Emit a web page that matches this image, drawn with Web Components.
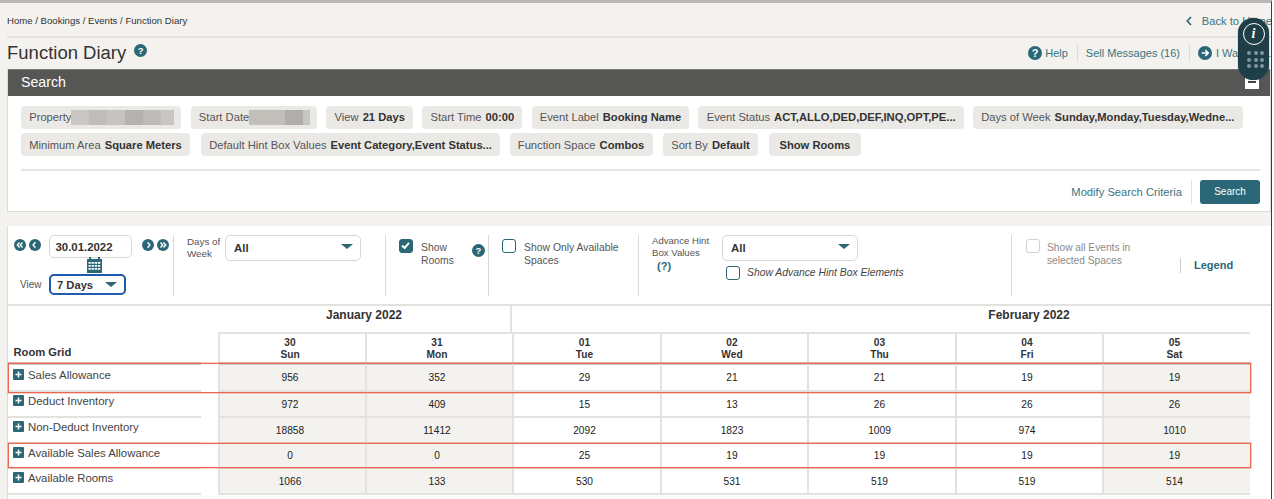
<!DOCTYPE html>
<html lang="en"><head><meta charset="utf-8"><title>Function Diary</title>
<style>
html,body{margin:0;padding:0;background:#fff;overflow:hidden;height:499px}
body{font-family:"Liberation Sans",Arial,sans-serif;color:#333;width:1274px}
</style></head><body>
<fd-page>
  <fd-crumbs>Home / Bookings / Events / Function Diary</fd-crumbs>
  <fd-title>Function Diary</fd-title>
  <fd-search></fd-search>
  <fd-diary></fd-diary>
</fd-page>
<fd-widget></fd-widget>
<script>
const TEAL='#2b6776';
const def=(name,html,init)=>customElements.define(name,class extends HTMLElement{
  constructor(){super();this.attachShadow({mode:'open'}).innerHTML=typeof html==='function'?html(this):html;}
  connectedCallback(){if(init)init(this)}
});
const arrow=(kind)=>{
  const p={l:'M7 3.6 4.4 6.5 7 9.4',r:'M6 3.6 8.6 6.5 6 9.4',ll:'M6 3.8 3.6 6.5 6 9.2M9.2 3.8 6.8 6.5 9.2 9.2',rr:'M3.8 3.8 6.2 6.5 3.8 9.2M7 3.8 9.4 6.5 7 9.2',a:'M3.4 6.5h6M6.8 3.8 9.5 6.5 6.8 9.2'}[kind];
  return `<svg width="100%" height="100%" viewBox="0 0 13 13"><circle cx="6.5" cy="6.5" r="6.5" fill="${TEAL}"/><path d="${p}" fill="none" stroke="#fff" stroke-width="1.5"/></svg>`;
};
def('fd-ico',el=>`<style>:host{display:inline-block;width:12px;height:12px;flex:none}svg{display:block}</style>${arrow(el.getAttribute('k'))}`);
def('fd-q',`<style>:host{display:inline-flex;align-items:center;justify-content:center;width:var(--s,13px);height:var(--s,13px);border-radius:50%;background:${TEAL};color:#fff;font:bold var(--f,9.5px) "Liberation Sans",sans-serif;flex:none}</style>?`);
def('fd-page',`<style>:host{display:block;width:1272px;height:499px;box-sizing:border-box;background:#f3f2ee;border-top:3px solid #b9b8b4;border-right:1px solid #3c3c3c;overflow:hidden}</style><slot></slot>`);
def('fd-crumbs',`<style>:host{display:flex;box-sizing:border-box;height:35px;margin-left:7px;padding-top:12px;border-bottom:2px solid #e3e2de;font-size:9.6px;line-height:12px;color:#333;position:relative}
.b{margin-left:auto;margin-right:-1px;display:flex;align-items:center;gap:10px;color:#3a7380;font-size:11.2px;position:relative;top:0;white-space:nowrap;height:12px}svg{display:block}</style>
<span><slot></slot></span><span class="b"><svg width="6" height="10" viewBox="0 0 6 10"><path d="M5 1 1.2 5 5 9" fill="none" stroke="${TEAL}" stroke-width="1.6"/></svg>Back to Home</span>`);
def('fd-title',`<style>:host{display:flex;align-items:center;height:31px;margin-left:7px;box-sizing:border-box}
h1{margin:0;font-weight:400;font-size:18.5px;color:#333;line-height:22px;margin-top:-1px}
fd-q{margin:-7px 0 0 8px}
.r{margin-left:auto;display:flex;align-items:center;font-size:11px;color:#3a7380;white-space:nowrap;margin-top:-1px}
.r fd-ico,.r fd-q{width:14px;height:14px;margin:0 3px 0 0}
.d{width:1px;height:18px;background:#dddcd8;margin:0 9px}
.c{width:55px;overflow:hidden}
</style><h1><slot></slot></h1><fd-q></fd-q>
<div class="r"><fd-q style="--s:14px;--f:11px"></fd-q><span>Help</span><i class="d" style="margin-right:8px"></i><span>Sell Messages (16)</span><i class="d" style="margin-right:8px"></i><fd-ico k="a" style="margin-right:4px"></fd-ico><span class="c">I Want To...</span></div>`);
def('fd-chip',el=>`<style>:host{display:inline-flex;align-items:center;gap:var(--g,4px);box-sizing:border-box;height:23px;padding:0 8.2px;background:#ebe9e5;border-radius:4px;font-size:11.2px;color:#555;white-space:nowrap;flex:none}
b{color:#333}b:empty{display:none}</style><slot></slot><b>${el.getAttribute('v')||''}</b>`);
def('fd-blur',el=>`<style>:host{display:inline-flex;height:15px;margin:0 -1.2px 0 -4px}i{display:block;height:15px}</style>${(el.getAttribute('c')||'').split(',').map(s=>{const[a,w]=s.split(':');return `<i style="background:${a};width:${w}px"></i>`}).join('')}`);
def('fd-search',`<style>:host{display:block;margin:0 0 14px 7px;background:#fff;border:1px solid #dcdbd7;border-top:0;box-sizing:border-box;height:143px}
header{height:27px;background:#565654;border-top:1px solid #777;box-sizing:border-box;color:#fff;font-size:14.2px;padding-left:13px;line-height:25px;display:flex;justify-content:space-between}
.min{width:14px;height:11px;background:#fff;margin:8px 11px 0 0;position:relative}
.min:after{content:"";position:absolute;left:3px;right:3px;top:3px;height:2px;background:#444}
.chips{margin:0 10px 0 13px;padding:9.5px 0 12.5px;border-bottom:2px solid #e6e5e1;display:flex;flex-direction:column;gap:4.5px}
.row{display:flex;gap:9.2px}
.row.b{gap:9px}
.act{display:flex;justify-content:flex-end;align-items:center;margin:9px 10px 0 0;font-size:11.2px;color:#3a7380}
.act i{width:1px;height:24px;background:#e3e2de;margin:0 8.5px}
.btn{background:${TEAL};color:#fff;border-radius:3px;width:60px;height:24px;line-height:24px;text-align:center;font-size:10px}
</style>
<header>Search<span class="min"></span></header>
<div class="chips">
<div class="row">
<fd-chip>Property<fd-blur c="#c9c7c3:18,#bfbdb9:18,#c6c4c0:18,#b4b2ae:18,#bebcb8:18,#c8c6c2:13"></fd-blur></fd-chip>
<fd-chip>Start Date<fd-blur c="#c1bfba:36,#b0aeaa:18,#c8c6c2:7"></fd-blur></fd-chip>
<fd-chip v="21 Days">View</fd-chip>
<fd-chip v="00:00">Start Time</fd-chip>
<fd-chip v="Booking Name">Event Label</fd-chip>
<fd-chip v="ACT,ALLO,DED,DEF,INQ,OPT,PE...">Event Status</fd-chip>
<fd-chip v="Sunday,Monday,Tuesday,Wedne...">Days of Week</fd-chip>
</div>
<div class="row b">
<fd-chip v="Square Meters" style="margin-right:2px">Minimum Area</fd-chip>
<fd-chip v="Event Category,Event Status..." style="margin-right:.5px">Default Hint Box Values</fd-chip>
<fd-chip v="Combos" style="margin-right:1.5px">Function Space</fd-chip>
<fd-chip v="Default" style="margin-right:2px">Sort By</fd-chip>
<fd-chip v="Show Rooms" style="padding:0 10.5px;--g:0"></fd-chip>
</div></div>
<div class="act"><span>Modify Search Criteria</span><i></i><span class="btn">Search</span></div>`);
def('fd-select',`<style>:host{display:flex;align-items:center;justify-content:space-between;box-sizing:border-box;background:#fff;border:1px solid #d8d7d3;border-radius:5px;font-size:11.4px;font-weight:700;color:#333;padding:1px 7px 0 8px;height:26px}
:host([focus]){border:2px solid #1c5bb0;padding:0 7px}
i{width:0;height:0;border:6px solid transparent;border-top:5.5px solid ${TEAL};border-bottom:0;margin-top:-5px}
:host([focus]) i{margin-top:0}
</style><slot></slot><i></i>`);
def('fd-check',el=>{const on=el.hasAttribute('on'),dis=el.hasAttribute('dis');return `<style>:host{display:flex;align-items:flex-start;gap:8px;font-size:10.4px;line-height:13px;color:${dis?'#8a8a88':'#555'}}
.b{width:14px;height:14px;box-sizing:border-box;border-radius:3px;flex:none;border:1.5px solid ${dis?'#d3d2ce':TEAL};background:${on?TEAL:'#fff'}}svg{display:block}
.t{margin-top:1.5px}
:host([it]){font-style:italic;font-size:10.35px;color:#444;gap:7px}:host([it]) .t{margin-top:0}
:host([dis]){gap:7px;font-size:10.2px}</style><span class="b">${on?'<svg width="11" height="11" viewBox="0 0 11 11"><path d="M2 5.5 4.6 8 9 2.8" fill="none" stroke="#fff" stroke-width="2"/></svg>':''}</span><span class="t"><slot></slot></span>`});
def('fd-toolbar',`<style>:host{display:flex;height:80px;box-sizing:border-box;padding-top:9px;border-bottom:2px solid #e3e2de;font-size:10px;color:#555}
section{box-sizing:border-box;height:61px;border-right:1px solid #dcdbd7;flex:none;position:relative}
.s1{width:166px;padding-left:6px}
.top{display:flex;align-items:flex-start}
.top fd-ico{margin-top:4px}
.nav{display:flex;gap:2.500px}
.date{width:83px;height:23px;box-sizing:border-box;border:1px solid #d8d7d3;border-radius:5px;font:700 11.4px/22px "Liberation Sans",sans-serif;color:#333;padding-left:5.5px;margin:0 10px 0 8.500px}
.cal{display:block;margin:-1px 0 0 72px}
.v{display:flex;align-items:center;margin-top:1px}
.v span{margin-left:6px;width:29px}
.v fd-select{width:77px;height:21px;font-size:11.2px;padding-left:6px}
.s2{width:212px;display:flex;padding-left:13px;gap:6px;line-height:11.5px;font-size:9.8px}
.s2 div{padding-top:1px;width:32px;white-space:nowrap}
.s2 fd-select{width:136px}
.s3{width:103px;padding:4px 0 0 13px;position:relative;display:flex}
.s3 fd-q{margin:5px 0 0 0;position:absolute;left:86px}
.s4{width:150px;padding:4px 0 0 13px}
.s5{width:373px;padding-left:13px;display:flex;gap:12px;font-size:9.6px;line-height:11.5px}
.s5 .l{width:58px;padding-top:0}
.s5 .q{display:block;color:${TEAL};font:700 11px/14px "Liberation Sans",sans-serif;margin:1px 0 0 5px}
.s5 fd-select{width:136px}
.s5 fd-check{margin:5px 0 0 4px}
.s6{border:0;padding:4px 0 0 14px;display:flex;flex:1}
.leg{display:flex;align-items:center;height:15px;margin:19px 0 0 29px;border-left:1px solid #cfcec9;padding-left:13px;color:${TEAL};font:700 11px/15px "Liberation Sans",sans-serif;white-space:nowrap}
.s6 fd-check{width:125px}
</style>
<section class="s1"><div class="top"><span class="nav"><fd-ico k="ll"></fd-ico><fd-ico k="l"></fd-ico></span><span class="date">30.01.2022</span><span class="nav"><fd-ico k="r"></fd-ico><fd-ico k="rr"></fd-ico></span></div>
<svg class="cal" width="17" height="16" viewBox="0 0 17 16"><path fill="${TEAL}" d="M1 2h2V0h2v2h7V0h2v2h2v14H1zM2.5 5v1.800h2.200V5zm3 0v1.800h2.400V5zm3.200 0v1.800h2.400V5zm3.100 0v1.800h2.500V5zM2.500 8v1.800h2.200V8zm3 0v1.800h2.400V8zm3.200 0v1.800h2.400V8zm3.100 0v1.800h2.500V8zM2.500 11v1.800h2.200V11zm3 0v1.800h2.400V11zm3.200 0v1.800h2.400V11zm3.100 0v1.800h2.500V11z" fill-rule="evenodd"/></svg>
<div class="v"><span>View</span><fd-select focus>7 Days</fd-select></div></section>
<section class="s2"><div>Days of<br>Week</div><fd-select>All</fd-select></section>
<section class="s3"><fd-check on>Show<br>Rooms</fd-check><fd-q></fd-q></section>
<section class="s4"><fd-check>Show Only Available<br>Spaces</fd-check></section>
<section class="s5"><div class="l">Advance Hint<br>Box Values<span class="q">(?)</span></div><div><fd-select>All</fd-select><fd-check it>Show Advance Hint Box Elements</fd-check></div></section>
<section class="s6"><fd-check dis>Show all Events in<br>selected Spaces</fd-check><span class="leg">Legend</span></section>`);
const days=[['30','Sun'],['31','Mon'],['01','Tue'],['02','Wed'],['03','Thu'],['04','Fri'],['05','Sat']];
const rows=[['Sales Allowance',[956,352,29,21,21,19,19]],['Deduct Inventory',[972,409,15,13,26,26,26]],['Non-Deduct Inventory',[18858,11412,2092,1823,1009,974,1010]],['Available Sales Allowance',[0,0,25,19,19,19,19]],['Available Rooms',[1066,133,530,531,519,519,514]]];
const plus=`<svg width="11" height="11" viewBox="0 0 11 11"><rect width="11" height="11" rx="1" fill="${TEAL}"/><path d="M5.500 2.500v6M2.500 5.500h6" stroke="#fff" stroke-width="1.500"/></svg>`;
def('fd-grid',()=>{
 let h=`<style>:host{display:grid;position:relative;grid-template-columns:210px 147px 147px 148px 147px 148px 147px 148px 1fr;grid-template-rows:28px 28px 30px 26px 26px 25px 26px;font-size:10.2px;color:#222}
 .mon{font:700 12px/18px "Liberation Sans",sans-serif;text-align:center;color:#333;box-sizing:border-box;border-bottom:2px solid #e3e2de}
 .m1{grid-column:2/4;border-right:2px solid #e3e2de}.m2{grid-column:4/9;padding-left:296px}.blank{grid-column:1;grid-row:1/3;display:flex;align-items:flex-end;font:700 11.2px/14px "Liberation Sans",sans-serif;padding:0 0 3px 5.500px;color:#333}
 .day{font-weight:700;text-align:center;line-height:12px;padding:3px 5px 0 0;box-sizing:border-box;border-left:2px solid #e3e2de;color:#333}
 .lab{display:flex;align-items:flex-start;font-size:11.400px;color:#444;box-sizing:border-box;padding:2.5px 17px 0 5px;gap:4px;position:relative;line-height:13px}
 .lab:after{content:"";position:absolute;left:0;right:17px;bottom:0;height:2px;background:#e3e2de}
 .lab.r1{padding-top:6.500px}
 .lab.r1:before{content:"";position:absolute;left:0;right:17px;top:0;height:3px;background:#cfcecb}
 .lab.last{padding-top:3px}
 .lab svg{flex:none}
 .c{display:flex;align-items:center;justify-content:center;box-sizing:border-box;border-left:2px solid #e3e2de;border-bottom:2px solid #e3e2de;padding-right:5px}
 .c.g{background:#f3f2ee}
 .c.r1{border-top:3px solid #cfcecb}
 .box{position:absolute;left:0;width:1243px;box-sizing:border-box;border:1px solid #ec6650;box-shadow:0 0 0 .75px rgba(238,110,90,.45);pointer-events:none}
 </style>
 <div class="blank">Room Grid</div><div class="mon m1">January 2022</div><div class="mon m2">February 2022</div><div></div>`;
 days.forEach(d=>h+=`<div class="day">${d[0]}<br>${d[1]}</div>`);
 h+='<div></div>';
 rows.forEach((r,i)=>{
  const t=i==0?' r1':'';
  h+=`<div class="lab${t}${i==4?' last':''}">${plus}<span>${r[0]}</span></div>`;
  r[1].forEach((v,j)=>h+=`<div class="c${t}${[0,1,6].includes(j)?' g':''}">${v}</div>`);
  h+='<div></div>';
 });
 h+=`<div class="box" style="top:57px;height:30px"></div><div class="box" style="top:137px;height:25px"></div>`;
 return h;
});
def('fd-diary',`<style>:host{display:block;margin-left:7px;background:#fff;border-left:1px solid #dcdbd7;height:280px}</style><fd-toolbar></fd-toolbar><fd-grid></fd-grid>`);
def('fd-widget',`<style>:host{position:absolute;left:1238px;top:18px;width:31px;height:62px;border-radius:15.500px;background:#1f3f48;box-shadow:0 0 1px #1f3f48}
.i{position:absolute;left:4.500px;top:4.500px;width:22px;height:22px;border:1.500px solid #fff;box-sizing:border-box;border-radius:50%;color:#fff;font:italic 700 14px/19px "Liberation Serif",serif;text-align:center}
.g{position:absolute;left:9px;top:33px;display:grid;grid-template-columns:repeat(3,4px);gap:2.500px 2.500px}
.g i{width:4px;height:4px;border-radius:50%;background:#7f97a0}</style>
<div class="i">i</div><div class="g"><i></i><i></i><i></i><i></i><i></i><i></i><i></i><i></i><i></i></div>`);
</script>
</body></html>
